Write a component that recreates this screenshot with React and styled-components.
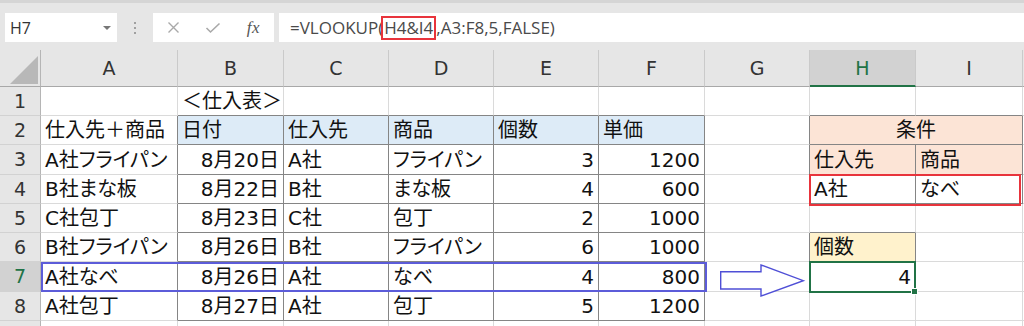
import React from "react";
import styled, { createGlobalStyle } from "styled-components";

const CELL_FONT = `"DejaVu Sans", "Noto Sans CJK JP", sans-serif`;
const UI_FONT = `"Open Sans", "Noto Sans", sans-serif`;

const BLUE = "#ddebf7";
const ORANGE = "#fce4d6";
const GOLD = "#fff2cc";
const GRID = "#dadada";
const EDGE = "#858585";
const EXCEL_GREEN = "#217346";

const Global = createGlobalStyle`
  html, body { margin: 0; padding: 0; background: #fff; }
  body { width: 1024px; height: 326px; overflow: hidden; }
`;

const Page = styled.div`
  width: 1024px;
  height: 326px;
  overflow: hidden;
  display: flex;
  flex-direction: column;
`;

const Toolbar = styled.div`
  flex: 0 0 50px;
  box-sizing: border-box;
  border-top: 3px solid #d5d5d5;
  background: #e6e6e6;
  display: flex;
  align-items: flex-start;
  padding: 10px 0 0 5px;
`;

const NameBox = styled.div`
  width: 112px;
  height: 29px;
  box-sizing: border-box;
  background: #fff;
  display: flex;
  align-items: center;
  justify-content: space-between;
  padding: 0 6px 0 5px;
  font: 16px ${UI_FONT};
  color: #333;
`;

const DropArrow = styled.span`
  width: 0;
  height: 0;
  border-left: 4px solid transparent;
  border-right: 4px solid transparent;
  border-top: 4px solid #777;
`;

const Dots = styled.div`
  width: 36px;
  height: 29px;
  display: flex;
  flex-direction: column;
  align-items: center;
  justify-content: center;
  gap: 3px;
`;

const Dot = styled.span`
  width: 2px;
  height: 2px;
  background: #a0a0a0;
`;

const FxBox = styled.div`
  width: 121px;
  height: 29px;
  background: #fff;
  display: grid;
  grid-template-columns: 40px 40px 41px;
  align-items: center;
  justify-items: center;
  margin-right: 5px;
`;

const FxText = styled.span`
  font: italic 17px "Liberation Serif", serif;
  color: #555;
  letter-spacing: 0.5px;
`;

const FormulaBox = styled.div`
  flex: 1;
  height: 29px;
  background: #fff;
  display: flex;
  align-items: center;
  padding-left: 11px;
  font: 17px ${UI_FONT};
  color: #4a4a4a;
  white-space: nowrap;
`;

const RefMark = styled.span`
  display: inline-block;
  border: 2px solid #e8343c;
  line-height: 20px;
  padding: 0 1px 0 1px;
  margin-left: -2px;
`;

const Sheet = styled.div`
  position: relative;
  display: grid;
  grid-template-columns: 41px 137px 106px 105px 105px 105px 106px 105px 106px 107px 1fr;
  grid-template-rows: 37px 29px 29px 30px 29px 29px 29px 30px 29px 29px;
`;

const Corner = styled.div`
  box-sizing: border-box;
  background: #e6e6e6;
  border-right: 1px solid #b5b5b5;
  border-bottom: 1px solid #a8a8a8;
  display: flex;
  align-items: flex-end;
  justify-content: flex-end;
  padding: 0 2px 2px 0;
`;

const CornerTriangle = styled.span`
  width: 28px;
  height: 28px;
  background: #b8b8b8;
  clip-path: polygon(100% 0, 100% 100%, 0 100%);
`;

const ColHeader = styled.div`
  box-sizing: border-box;
  background: ${(p) => (p.$active ? "#d2d2d2" : "#e6e6e6")};
  color: ${(p) => (p.$active ? EXCEL_GREEN : "#333")};
  border-right: 1px solid #cacaca;
  border-bottom: ${(p) => (p.$active ? `2px solid ${EXCEL_GREEN}` : "1px solid #a8a8a8")};
  display: flex;
  align-items: center;
  justify-content: center;
  font: 19px/1 ${CELL_FONT};
  padding-top: 1px;
`;

const RowHeader = styled.div`
  box-sizing: border-box;
  background: ${(p) => (p.$active ? "#d2d2d2" : "#e6e6e6")};
  color: ${(p) => (p.$active ? EXCEL_GREEN : "#333")};
  border-right: 1px solid #b5b5b5;
  border-bottom: 1px solid #d2d2d2;
  display: flex;
  align-items: center;
  justify-content: center;
  font: 19px/1 ${CELL_FONT};
`;

const Cell = styled.div`
  box-sizing: border-box;
  grid-column: ${(p) => (p.$span ? `span ${p.$span}` : "auto")};
  background: ${(p) => p.$bg || "#fff"};
  border-right: 1px solid ${(p) => p.$rb};
  border-bottom: 1px solid ${(p) => p.$bb};
  display: flex;
  align-items: center;
  justify-content: ${(p) =>
    p.$align === "right" ? "flex-end" : p.$align === "center" ? "center" : "flex-start"};
  padding: 0 4px;
  font: 20px/1 ${CELL_FONT};
  font-feature-settings: ${(p) => (p.$palt ? '"palt"' : "normal")};
  color: #111;
  white-space: nowrap;
  overflow: hidden;
`;

const RowOutline = styled.div`
  position: absolute;
  left: 41px;
  top: 212px;
  width: 666px;
  height: 30px;
  box-sizing: border-box;
  border: 2px solid #5c5cd9;
  pointer-events: none;
`;

const RedOutline = styled.div`
  position: absolute;
  left: 809px;
  top: 124px;
  width: 212px;
  height: 32px;
  box-sizing: border-box;
  border: 2px solid #e8343c;
  pointer-events: none;
`;

const Selection = styled.div`
  position: absolute;
  left: 809px;
  top: 211px;
  width: 107px;
  height: 32px;
  box-sizing: border-box;
  border: 2px solid ${EXCEL_GREEN};
  pointer-events: none;
`;

const FillHandle = styled.span`
  position: absolute;
  right: -4px;
  bottom: -4px;
  width: 5px;
  height: 5px;
  background: ${EXCEL_GREEN};
  border: 1px solid #fff;
`;

const ArrowSvg = styled.svg`
  position: absolute;
  left: 715px;
  top: 210px;
  pointer-events: none;
`;

const COLS = ["A", "B", "C", "D", "E", "F", "G", "H", "I", "J"];
const ROWS = [1, 2, 3, 4, 5, 6, 7, 8, 9];

const cells = {
  B1: { v: "＜仕入表＞" },
  A2: { v: "仕入先＋商品" },
  B2: { v: "日付", bg: BLUE },
  C2: { v: "仕入先", bg: BLUE },
  D2: { v: "商品", bg: BLUE },
  E2: { v: "個数", bg: BLUE },
  F2: { v: "単価", bg: BLUE },
  H2: { v: "条件", bg: ORANGE, span: 2, align: "center" },
  H3: { v: "仕入先", bg: ORANGE },
  I3: { v: "商品", bg: ORANGE },
  H4: { v: "A社" },
  I4: { v: "なべ" },
  H6: { v: "個数", bg: GOLD },
  H7: { v: "4", align: "right" },
};

const table = [
  ["A社フライパン", "8月20日", "A社", "フライパン", "3", "1200"],
  ["B社まな板", "8月22日", "B社", "まな板", "4", "600"],
  ["C社包丁", "8月23日", "C社", "包丁", "2", "1000"],
  ["B社フライパン", "8月26日", "B社", "フライパン", "6", "1000"],
  ["A社なべ", "8月26日", "A社", "なべ", "4", "800"],
  ["A社包丁", "8月27日", "A社", "包丁", "5", "1200"],
];
table.forEach((row, i) => {
  row.forEach((v, c) => {
    cells[`${COLS[c]}${i + 3}`] = { v, align: c >= 1 && c !== 2 && c !== 3 ? "right" : "left" };
  });
});

const inBox = (r, c) =>
  (r >= 2 && r <= 8 && c >= 1 && c <= 5) ||
  (r >= 2 && r <= 4 && c >= 7 && c <= 8) ||
  (r >= 6 && r <= 7 && c === 7);

const hasKana = (s) => /[\u3040-\u30ff]/.test(s);

function XIcon() {
  return (
    <svg width="13" height="13" viewBox="0 0 13 13">
      <path d="M1.5 1.5 L11.5 11.5 M11.5 1.5 L1.5 11.5" stroke="#a9a9a9" strokeWidth="1.4" fill="none" />
    </svg>
  );
}

function CheckIcon() {
  return (
    <svg width="16" height="12" viewBox="0 0 16 12">
      <path d="M1.5 6 L5.5 10 L14.5 1.5" stroke="#a9a9a9" strokeWidth="1.6" fill="none" />
    </svg>
  );
}

function Arrow() {
  return (
    <ArrowSvg width="95" height="42" viewBox="0 0 95 42">
      <polygon
        points="5.7,11.7 46,11.7 46,5 88.3,20.7 46,36 46,29 5.7,29"
        fill="#fff"
        stroke="#4f4fd6"
        strokeWidth="1.4"
        strokeLinejoin="miter"
      />
    </ArrowSvg>
  );
}

export default function App() {
  const gridItems = [];
  gridItems.push(
    <Corner key="corner">
      <CornerTriangle />
    </Corner>
  );
  COLS.forEach((c) =>
    gridItems.push(
      <ColHeader key={`h${c}`} $active={c === "H"}>
        {c === "J" ? "" : c}
      </ColHeader>
    )
  );
  ROWS.forEach((r) => {
    gridItems.push(
      <RowHeader key={`r${r}`} $active={r === 7}>
        {r}
      </RowHeader>
    );
    COLS.forEach((col, c) => {
      if (r === 2 && col === "I") return;
      const cell = cells[`${col}${r}`] || {};
      const span = cell.span;
      const lastC = span ? c + span - 1 : c;
      const rb = inBox(r, lastC) || inBox(r, lastC + 1) ? EDGE : GRID;
      const bb = inBox(r, c) || inBox(r + 1, c) ? EDGE : GRID;
      gridItems.push(
        <Cell
          key={`${col}${r}`}
          $span={span}
          $bg={cell.bg}
          $rb={rb}
          $bb={bb}
          $align={cell.align}
          $palt={cell.v && hasKana(cell.v)}
        >
          {cell.v || ""}
        </Cell>
      );
    });
  });

  return (
    <>
      <Global />
      <Page>
        <Toolbar>
          <NameBox>
            <span>H7</span>
            <DropArrow />
          </NameBox>
          <Dots>
            <Dot />
            <Dot />
            <Dot />
          </Dots>
          <FxBox>
            <XIcon />
            <CheckIcon />
            <FxText>fx</FxText>
          </FxBox>
          <FormulaBox>
            =VLOOKUP(<RefMark>H4&amp;I4</RefMark>,A3:F8,5,FALSE)
          </FormulaBox>
        </Toolbar>
        <Sheet>
          {gridItems}
          <RedOutline />
          <RowOutline />
          <Selection>
            <FillHandle />
          </Selection>
          <Arrow />
        </Sheet>
      </Page>
    </>
  );
}
